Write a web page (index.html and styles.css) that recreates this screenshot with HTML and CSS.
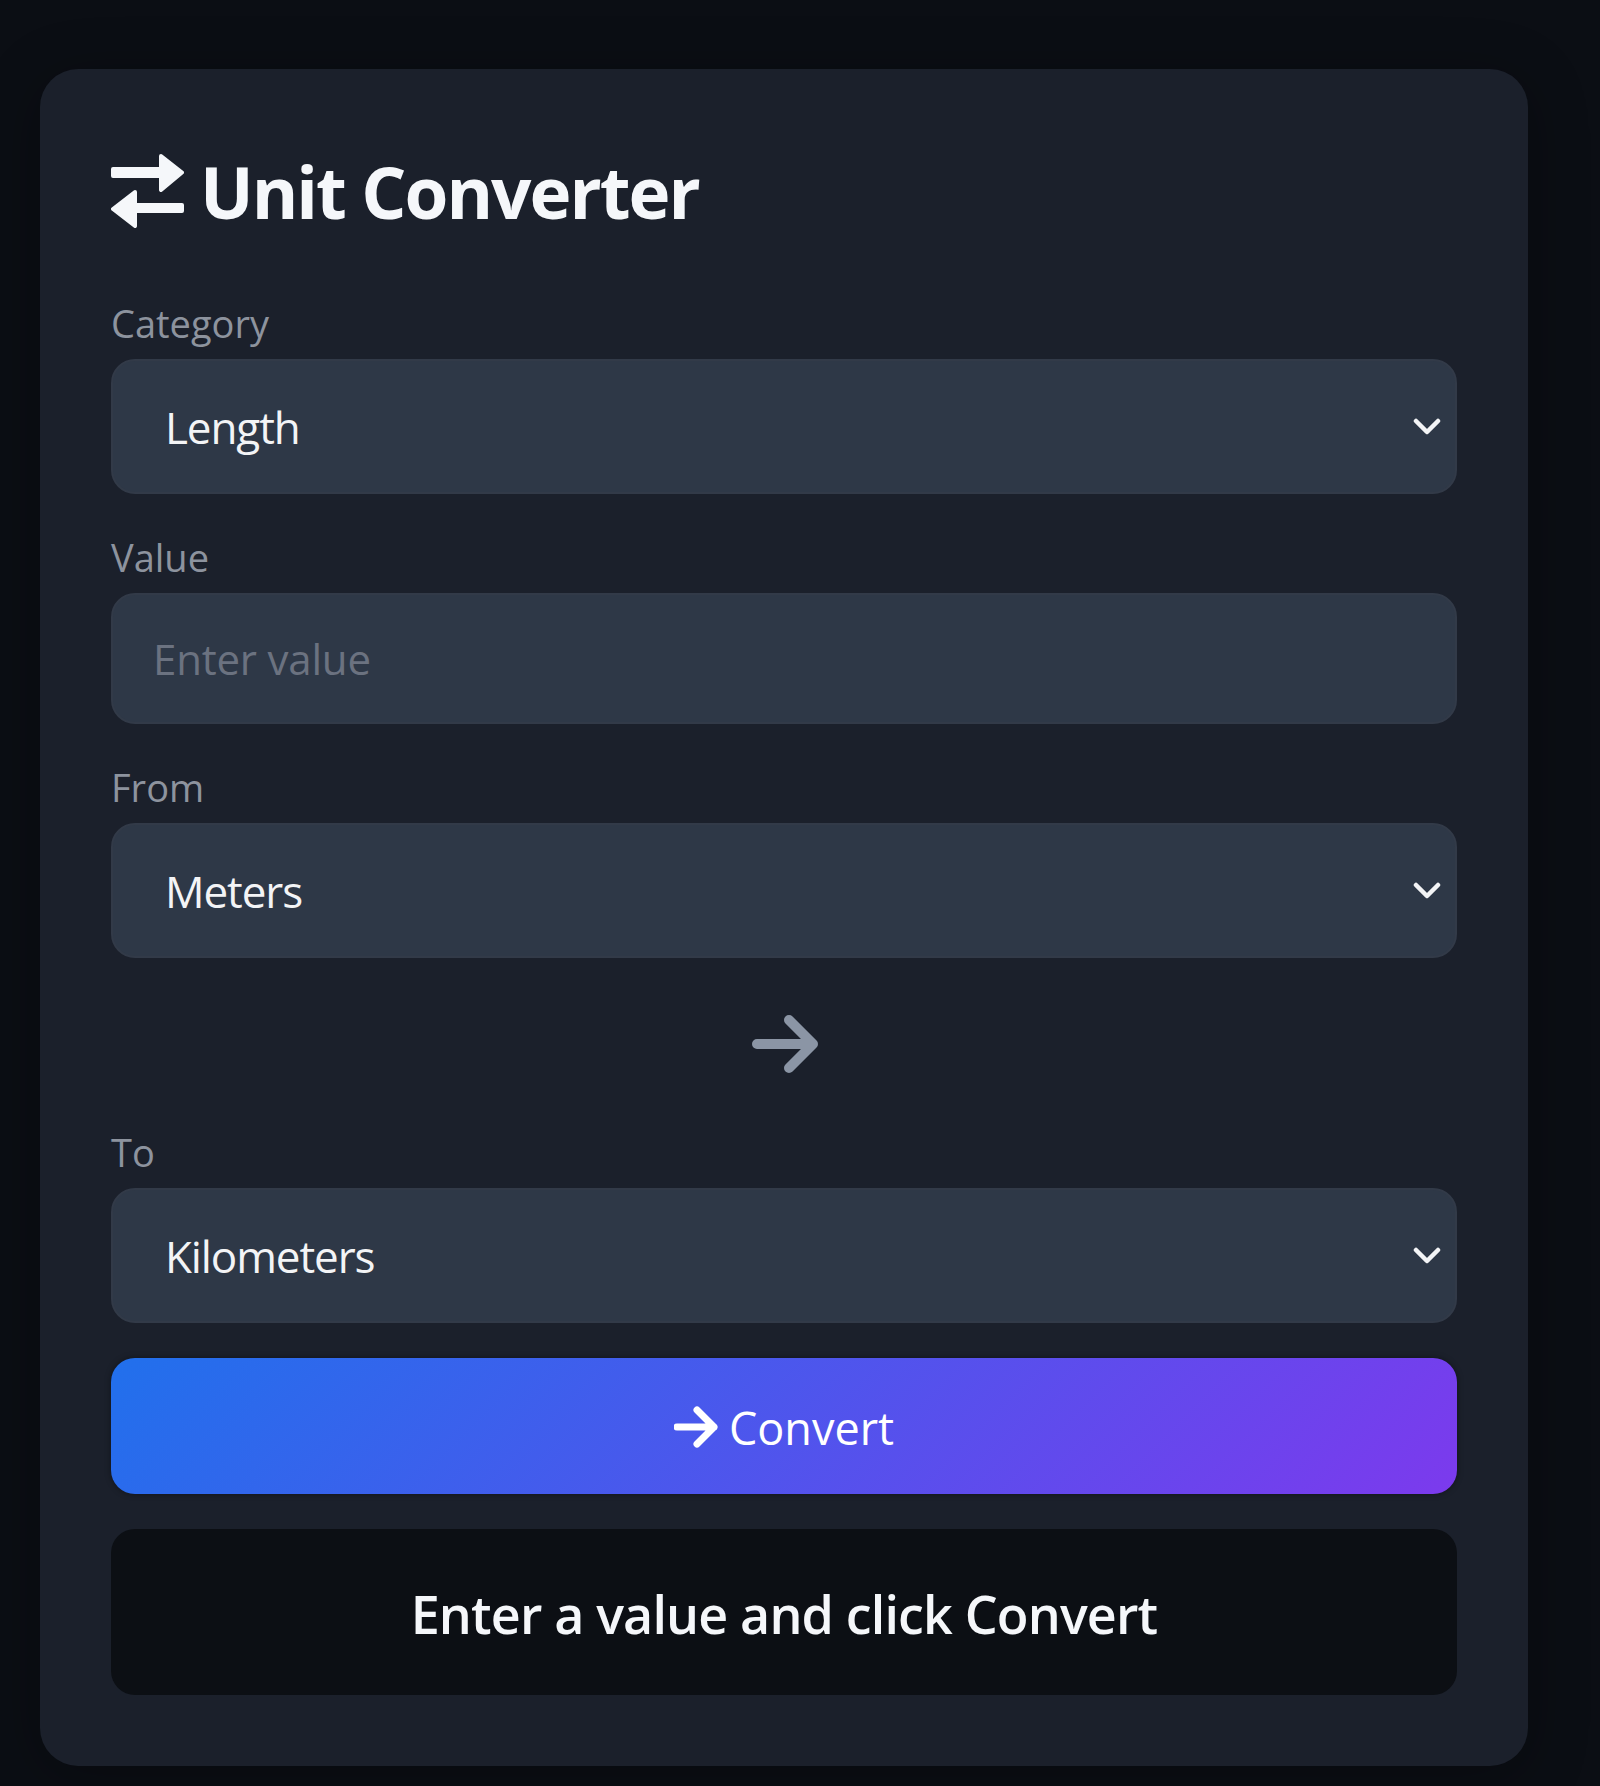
FILE: index.html
```html
<!DOCTYPE html>
<html lang="en">
<head>
    <meta charset="UTF-8">
    <meta name="viewport" content="width=device-width, initial-scale=1">
    <title>Unit Converter</title>
    <link rel="stylesheet" href="styles.css">
</head>
<body>
    <main class="card">
        <h1 class="title">
            <svg class="title_icon" viewBox="0 0 73 74" aria-hidden="true">
                <path d="M2 15H50V2L71 18.500L50 36V22H2z"/>
                <path d="M71 51H24V38L2 55L24 72V57H71z"/>
            </svg>
            Unit Converter
        </h1>

        <form class="form">
            <div class="field">
                <label class="label" for="category">Category</label>
                <div class="select_wrap">
                    <select class="select" id="category">
                        <option>Length</option>
                    </select>
                    <svg class="chevron" viewBox="0 0 28 18" aria-hidden="true"><path d="M3 3l11 11L25 3"/></svg>
                </div>
            </div>

            <div class="field">
                <label class="label" for="value">Value</label>
                <input class="input" id="value" type="text" placeholder="Enter value">
            </div>

            <div class="field">
                <label class="label" for="from">From</label>
                <div class="select_wrap">
                    <select class="select" id="from">
                        <option>Meters</option>
                    </select>
                    <svg class="chevron" viewBox="0 0 28 18" aria-hidden="true"><path d="M3 3l11 11L25 3"/></svg>
                </div>
            </div>

            <div class="arrow_row">
                <svg class="arrow" viewBox="0 0 67 58" aria-hidden="true"><path d="M5 29h56M37 5l24 24-24 24"/></svg>
            </div>

            <div class="field">
                <label class="label" for="to">To</label>
                <div class="select_wrap">
                    <select class="select" id="to">
                        <option>Kilometers</option>
                    </select>
                    <svg class="chevron" viewBox="0 0 28 18" aria-hidden="true"><path d="M3 3l11 11L25 3"/></svg>
                </div>
            </div>

            <button class="convert" type="button">
                <svg class="convert_icon" viewBox="0 0 44 42" aria-hidden="true"><path d="M3 21h37M23 4l17 17-17 17"/></svg>
                Convert
            </button>

            <div class="result">Enter a value and click Convert</div>
        </form>
    </main>
</body>
</html>
```

FILE: styles.css
```css
* {
    margin: 0;
    padding: 0;
    box-sizing: border-box;
    font-family: "Open Sans", "Noto Sans", sans-serif;
}
body {
    background-color: #0b0e14;
    overflow-x: hidden;
}
.card {
    width: 1488px;
    height: 1697px;
    margin: 69px 0 20px 40px;
    padding: 71px;
    background-color: #1b202b;
    border-radius: 38px;
    box-shadow: 0 10px 60px rgba(0, 0, 0, 0.3);
}
.title {
    display: flex;
    align-items: center;
    gap: 16px;
    height: 102px;
    margin-bottom: 53px;
    color: #f5f7fa;
    font-size: 71px;
    font-weight: 700;
    letter-spacing: -2px;
}
.title_icon {
    width: 73px;
    height: 74px;
    flex: none;
    fill: currentColor;
    stroke: currentColor;
    stroke-width: 4;
    stroke-linejoin: round;
}
.form {
    display: flex;
    flex-direction: column;
    gap: 35px;
}
.label {
    display: block;
    height: 64px;
    color: #8d939e;
    font-size: 38px;
    font-weight: 500;
    line-height: 56px;
}
.select_wrap {
    position: relative;
}
.select {
    display: block;
    width: 100%;
    height: 135px;
    padding-left: 52px;
    appearance: none;
    border: 2px solid #323a48;
    border-radius: 24px;
    background-color: #2e3847;
    color: #f3f4f6;
    font-size: 44px;
    letter-spacing: -1.1px;
}
.chevron {
    position: absolute;
    top: 50%;
    right: 16px;
    width: 28px;
    height: 18px;
    margin-top: -9px;
    fill: none;
    stroke: #f3f4f6;
    stroke-width: 4.500;
    stroke-linecap: round;
    stroke-linejoin: round;
}
.input {
    display: block;
    width: 100%;
    height: 131px;
    padding-left: 40px;
    border: 2px solid #323a48;
    border-radius: 24px;
    background-color: #2e3847;
    color: #f3f4f6;
    font-size: 42px;
    letter-spacing: -0.2px;
}
.input::placeholder {
    color: #6b7280;
}
.arrow_row {
    display: flex;
    align-items: center;
    justify-content: center;
    height: 96px;
    padding: 6px 0 0 2px;
}
.arrow {
    width: 67px;
    height: 58px;
    fill: none;
    stroke: #8b95a5;
    stroke-width: 10;
    stroke-linecap: round;
    stroke-linejoin: round;
}
.convert {
    display: flex;
    align-items: center;
    justify-content: center;
    gap: 11px;
    height: 136px;
    padding-top: 2px;
    border: none;
    border-radius: 24px;
    background-image: linear-gradient(135deg, #2170ec, #7c3aed);
    box-shadow: 0 0 6px rgba(0, 0, 0, 0.4);
    color: #fff;
    font-size: 45px;
}
.convert_icon {
    width: 44px;
    height: 42px;
    fill: none;
    stroke: #fff;
    stroke-width: 7;
    stroke-linecap: round;
    stroke-linejoin: round;
}
.result {
    display: flex;
    align-items: center;
    justify-content: center;
    height: 166px;
    padding-top: 3px;
    border-radius: 24px;
    background-color: #0c0f14;
    color: #f5f7fa;
    font-size: 52px;
    font-weight: 600;
    letter-spacing: -0.84px;
}
```
